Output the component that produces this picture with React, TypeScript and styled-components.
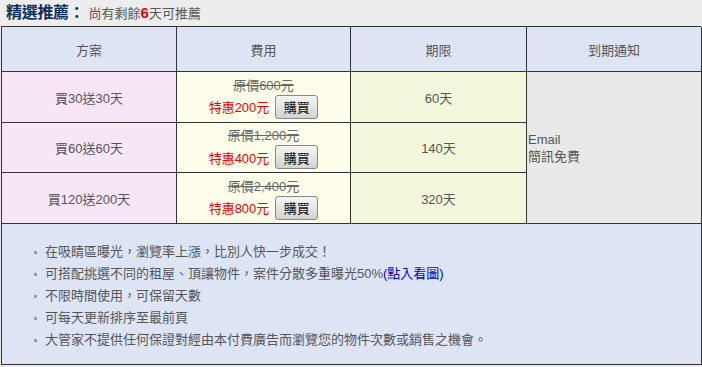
import React, { FC } from "react";
import styled, { createGlobalStyle } from "styled-components";

const GlobalStyle = createGlobalStyle`
  body {
    margin: 0;
    background: #ededed;
    font-family: "Liberation Sans", "Noto Sans CJK TC", sans-serif;
    font-size: 13px;
    color: #555;
  }
`;

const Page = styled.div`
  width: 702px;
  height: 367px;
  overflow: hidden;
`;

const TitleBar = styled.div`
  height: 26px;
  display: flex;
  align-items: center;
  padding: 0 0 4px 6px;
  box-sizing: border-box;
  line-height: 1;
`;

const Title = styled.span`
  font-family: "Noto Sans CJK TC", sans-serif;
  font-weight: bold;
  font-size: 16px;
  color: #0f2f60;
  letter-spacing: -0.3px;
`;

const Remain = styled.span`
  font-size: 13px;
  color: #555;
  margin-left: 4px;
  padding-top: 2px;
`;

const RemainNum = styled.b`
  color: #ee0000;
  font-size: 15px;
`;

const Grid = styled.div`
  margin-left: 1px;
  width: 700px;
  display: grid;
  grid-template-columns: 175px 174px 176px 175px;
  grid-template-rows: 45px 51px 50px 51px 141px;
  border-top: 1px solid #333;
  border-left: 1px solid #333;
  box-sizing: border-box;
`;

const Cell = styled.div<{ $bg: string; $span?: number }>`
  background: ${(p) => p.$bg};
  border-right: 1px solid #333;
  border-bottom: 1px solid #333;
  display: flex;
  flex-direction: column;
  align-items: center;
  justify-content: center;
  ${(p) => (p.$span ? `grid-row: span ${p.$span};` : "")}
`;

const NoticeCell = styled(Cell)`
  align-items: flex-start;
  padding-left: 1px;
  padding-top: 1px;
  line-height: 17px;
`;

const Price = styled.div`
  display: flex;
  flex-direction: column;
  align-items: center;
  gap: 1px;
  padding-top: 1px;
`;

const OldPrice = styled.s`
  color: #666;
  line-height: 17px;
`;

const DealRow = styled.div`
  display: flex;
  align-items: center;
  gap: 6px;
`;

const Deal = styled.span`
  color: #ee0000;
  font-size: 13px;
`;

const BuyButton = styled.button`
  width: 43px;
  height: 24px;
  padding: 0;
  border: 1px solid #888;
  border-radius: 3px;
  background: linear-gradient(#f6f6f6, #d2d2d2);
  font-family: "Noto Sans CJK TC", sans-serif;
  font-size: 13px;
  color: #111;
  cursor: pointer;
`;

const Notes = styled.ul`
  grid-column: 1 / -1;
  background: #dde5f5;
  border-right: 1px solid #333;
  border-bottom: 1px solid #333;
  margin: 0;
  padding: 17px 0 0 43px;
  list-style: none;
  line-height: 22px;
`;

const Note = styled.li`
  position: relative;
  &::before {
    content: "";
    position: absolute;
    left: -11px;
    top: 10px;
    width: 3px;
    height: 3px;
    background: #999;
  }
`;

const Link = styled.a`
  color: #0000cc;
  text-decoration: none;
`;

const HEAD = "#dde5f5";
const PINK = "#f6e6f6";
const CREAM = "#fefeea";
const LIME = "#f3f8dc";
const GRAY = "#e9e9e9";

const plans = [
  { name: "買30送30天", old: "600", deal: "200", days: "60天" },
  { name: "買60送60天", old: "1,200", deal: "400", days: "140天" },
  { name: "買120送200天", old: "2,400", deal: "800", days: "320天" },
];

const App: FC = () => (
  <Page>
    <GlobalStyle />
    <TitleBar>
      <Title>精選推薦：</Title>
      <Remain>
        尚有剩餘<RemainNum>6</RemainNum>天可推薦
      </Remain>
    </TitleBar>
    <Grid>
      <Cell $bg={HEAD}>方案</Cell>
      <Cell $bg={HEAD}>費用</Cell>
      <Cell $bg={HEAD}>期限</Cell>
      <Cell $bg={HEAD}>到期通知</Cell>
      {plans.map((p, i) => (
        <React.Fragment key={p.name}>
          <Cell $bg={PINK}>{p.name}</Cell>
          <Cell $bg={CREAM}>
            <Price>
              <OldPrice>原價{p.old}元</OldPrice>
              <DealRow>
                <Deal>特惠{p.deal}元</Deal>
                <BuyButton>購買</BuyButton>
              </DealRow>
            </Price>
          </Cell>
          <Cell $bg={LIME}>{p.days}</Cell>
          {i === 0 && (
            <NoticeCell $bg={GRAY} $span={3}>
              <span>Email</span>
              <span>簡訊免費</span>
            </NoticeCell>
          )}
        </React.Fragment>
      ))}
      <Notes>
        <Note>在吸睛區曝光，瀏覽率上漲，比別人快一步成交！</Note>
        <Note>
          可搭配挑選不同的租屋、頂讓物件，案件分散多重曝光50%
          <Link href="#">(點入看圖)</Link>
        </Note>
        <Note>不限時間使用，可保留天數</Note>
        <Note>可每天更新排序至最前頁</Note>
        <Note>大管家不提供任何保證對經由本付費廣告而瀏覽您的物件次數或銷售之機會。</Note>
      </Notes>
    </Grid>
  </Page>
);

export default App;
